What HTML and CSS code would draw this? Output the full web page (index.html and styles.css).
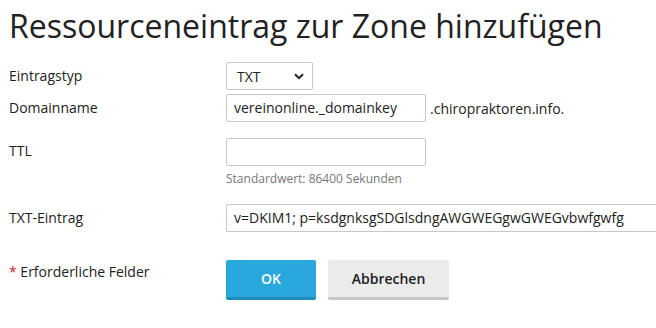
FILE: index.html
```html
<!DOCTYPE html>
<html lang="de">
<head>
<meta charset="utf-8">
<link rel="stylesheet" href="styles.css">
</head>
<body>
<h1 class="title">Ressourceneintrag zur Zone hinzufügen</h1>
<form class="form">
  <div class="row row-type">
    <label class="label">Eintragstyp</label>
    <div class="field">
      <div class="select"><span>TXT</span>
        <svg class="chev" width="10" height="7" viewBox="0 0 10 7"><path d="M1 1.2 L5 5.2 L9 1.2" fill="none" stroke="#222" stroke-width="2"/></svg>
      </div>
    </div>
  </div>
  <div class="row row-domain">
    <label class="label">Domainname</label>
    <div class="field inline">
      <div class="input w200">vereinonline._domainkey</div>
      <span class="suffix">.chiropraktoren.info.</span>
    </div>
  </div>
  <div class="row row-ttl">
    <label class="label">TTL</label>
    <div class="field">
      <div class="input w200"></div>
      <div class="hint">Standardwert: 86400 Sekunden</div>
    </div>
  </div>
  <div class="row row-txt">
    <label class="label">TXT-Eintrag</label>
    <div class="field">
      <div class="input wide">v=DKIM1; p=ksdgnksgSDGlsdngAWGWEGgwGWEGvbwfgwfg</div>
    </div>
  </div>
  <div class="row row-buttons">
    <div class="label"><span class="req">*</span> Erforderliche Felder</div>
    <div class="field buttons">
      <button type="button" class="btn btn-primary">OK</button>
      <button type="button" class="btn btn-secondary">Abbrechen</button>
    </div>
  </div>
</form>
</body>
</html>
```
FILE: styles.css
```css
* { box-sizing: border-box; }
html, body { margin: 0; padding: 0; background: #fff; overflow: hidden; }
body {
  font-family: "Open Sans", "DejaVu Sans", sans-serif;
  color: #222;
  font-size: 14px;
  width: 656px;
}
.title {
  margin: 0;
  padding: 6px 0 0 9px;
  font-size: 32px;
  font-weight: 400;
  line-height: 40px;
  color: #222;
  white-space: nowrap;
}
.form { padding: 0 0 0 9px; }
.row { display: flex; }
.label { width: 217px; flex: none; font-size: 14px; }
.field { flex: 1; min-width: 0; }
.inline { display: flex; align-items: center; gap: 4px; }
.row-type { margin-top: 16px; }
.row-type .label { padding-top: 4px; }
.select {
  width: 87px; height: 28px;
  border: 1px solid #c8c8c8; border-radius: 2px;
  display: flex; align-items: center; justify-content: space-between;
  padding: 0 8px 0 10px;
  font-size: 14px;
}
.row-domain { margin-top: 4px; }
.row-domain .label { padding-top: 4px; }
.input {
  height: 28px;
  border: 1px solid #c8c8c8; border-radius: 2px;
  padding: 0 7px;
  font-size: 14px; line-height: 26px;
  white-space: nowrap; overflow: hidden;
}
.w200 { width: 200px; }
.wide { width: calc(100% + 12px); border-right: none; }
.suffix { font-size: 14px; }
.row-ttl { margin-top: 16px; }
.row-ttl .label { padding-top: 3px; }
.hint { font-size: 12px; color: #777; margin-top: 4px; }
.row-txt { margin-top: 17px; }
.row-txt .label { padding-top: 4px; }
.row-buttons { margin-top: 28px; }
.row-buttons .label { padding-top: 2px; }
.req { color: #c02c2c; }
.buttons { display: flex; gap: 12px; }
.btn {
  font-family: inherit; font-size: 14px; font-weight: 600;
  height: 40px; border: none; border-radius: 2px; padding: 0; cursor: pointer;
}
.btn-primary { width: 90px; background: #28a8dc; color: #fff; border-bottom: 3px solid #1d8cbb; }
.btn-secondary { width: 121px; background: #ebebeb; color: #222; border-bottom: 3px solid #c6c6c6; }
```
